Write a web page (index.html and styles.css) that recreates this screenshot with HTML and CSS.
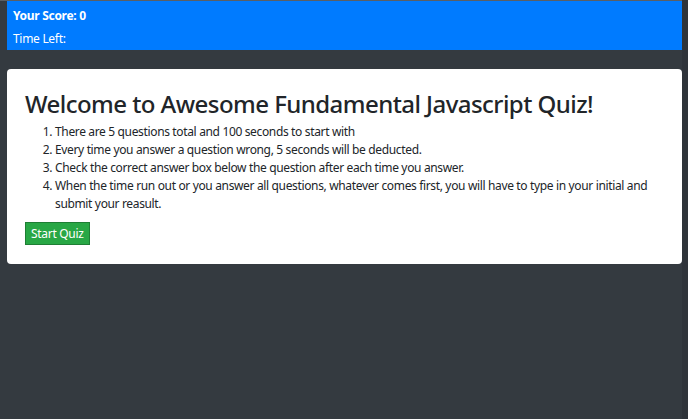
FILE: index.html
```html
<!DOCTYPE html>
<html>
<head>
<meta charset="utf-8">
<link rel="stylesheet" href="styles.css">
</head>
<body>
<div class="page">
  <header class="scorebar">
    <div class="score">Your Score: 0</div>
    <div class="timer">Time Left:</div>
  </header>
  <main class="card">
    <h1 class="title">Welcome to Awesome Fundamental Javascript Quiz!</h1>
    <ol class="rules">
      <li>There are 5 questions total and 100 seconds to start with</li>
      <li>Every time you answer a question wrong, 5 seconds will be deducted.</li>
      <li>Check the correct answer box below the question after each time you answer.</li>
      <li>When the time run out or you answer all questions, whatever comes first, you will have to type in your initial and submit your reasult.</li>
    </ol>
    <button class="start">Start Quiz</button>
  </main>
</div>
</body>
</html>
```
FILE: styles.css
```css
html, body {
  margin: 0;
  padding: 0;
  height: 100%;
}
body {
  background: #2f343a;
  font-family: "Noto Sans", "Open Sans", sans-serif;
  color: #212529;
}
.page {
  width: 682px;
  min-height: 100%;
  background: #343a40;
  padding: 1px 0 0 7px;
  box-sizing: border-box;
  border-top: 1px solid #5a5f64;
}
.scorebar {
  background: #007bff;
  color: #fff;
  height: 49px;
  padding: 6px 6px 0 6px;
  box-sizing: border-box;
  font-size: 12px;
  letter-spacing: -0.3px;
  margin-top: -1px;
}
.score {
  font-weight: bold;
  line-height: 17px;
}
.timer {
  margin-top: 6px;
  line-height: 17px;
}
.card {
  margin-top: 19px;
  background: #fff;
  border-radius: 4px;
  padding: 20px 18px 18px 18px;
  height: 195px;
  box-sizing: border-box;
}
.title {
  margin: 0;
  font-size: 24px;
  font-weight: 500;
  line-height: 30px;
  letter-spacing: -0.55px;
  color: #212529;
}
.rules {
  margin: 4px 0 8px 0;
  padding-left: 30px;
  font-size: 12px;
  line-height: 18px;
  letter-spacing: -0.35px;
}
.start {
  font-family: inherit;
  font-size: 12px;
  letter-spacing: -0.3px;
  color: #fff;
  background: #28a745;
  border: 1px solid #1e7e34;
  border-radius: 0;
  padding: 0 5px;
  height: 23px;
  line-height: 21px;
}
```
